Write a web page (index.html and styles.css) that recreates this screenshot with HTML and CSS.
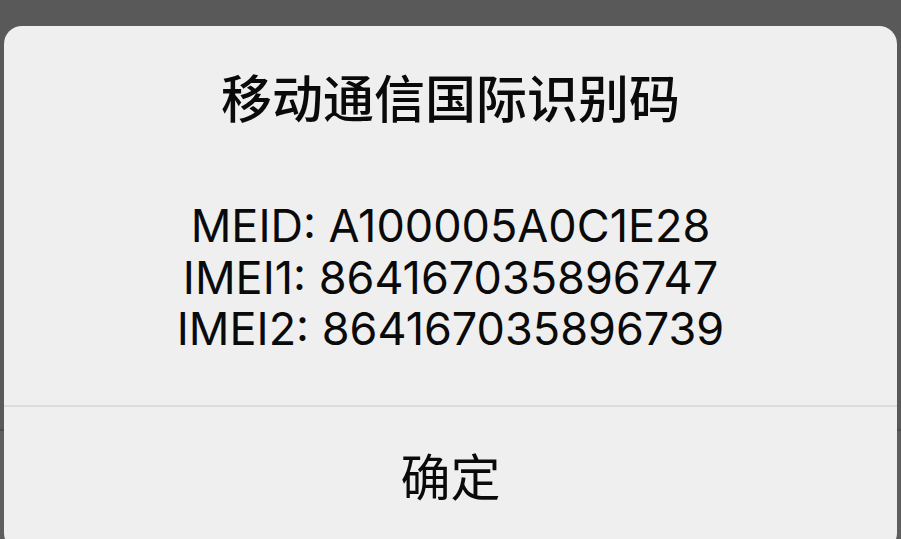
FILE: index.html
```html
<!DOCTYPE html>
<html lang="zh">
<head>
<meta charset="utf-8">
<title>移动通信国际识别码</title>
<link rel="stylesheet" href="styles.css">
</head>
<body>
<div class="dialog">
  <h1 class="title">移动通信国际识别码</h1>
  <div class="ids">
    <div class="line">MEID: A100005A0C1E28</div>
    <div class="line">IMEI1: 864167035896747</div>
    <div class="line">IMEI2: 864167035896739</div>
  </div>
  <div class="divider"></div>
  <div class="button">确定</div>
</div>
</body>
</html>
```
FILE: styles.css
```css
html, body {
  margin: 0;
  padding: 0;
  height: 100%;
  overflow: hidden;
}
body {
  background: linear-gradient(#595959 0, #595959 429px, #4c4c4c 429px, #4c4c4c 431px, #5e5e5e 431px);
  font-family: "Inter", "Noto Sans CJK SC", sans-serif;
  color: #0a0a0a;
}
.dialog {
  margin: 26px 4px 0;
  background: #efefef;
  border-radius: 18px;
  height: 525px;
  display: flex;
  flex-direction: column;
}
.title {
  margin: 0;
  padding-top: 40px;
  font-family: "Noto Sans CJK SC", sans-serif;
  font-weight: 500;
  font-size: 51px;
  line-height: 60px;
  text-align: center;
}
.ids {
  margin-top: 74px;
  text-align: center;
  font-size: 45px;
  font-weight: 400;
  line-height: 51.5px;
}
.divider {
  margin-top: 50px;
  height: 2px;
  background: #dcdcdc;
}
.button {
  height: 134px;
  line-height: 134px;
  text-align: center;
  font-family: "Noto Sans CJK SC", sans-serif;
  font-size: 50px;
}
```
